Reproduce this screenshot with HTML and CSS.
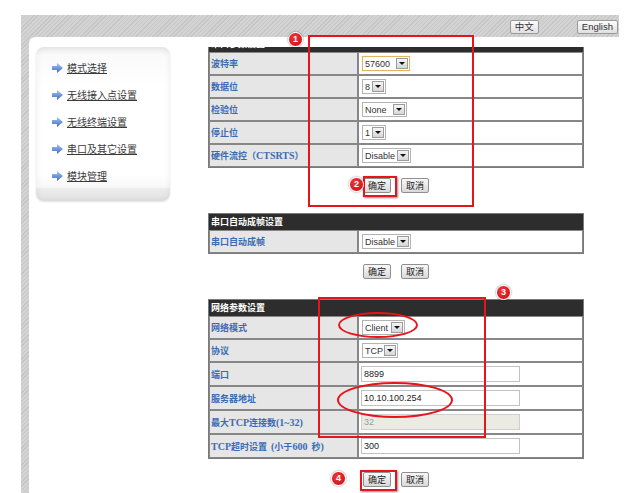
FILE: index.html
```html
<!DOCTYPE html>
<html lang="zh-CN">
<head>
<meta charset="utf-8">
<title>串口及其它设置</title>
<link rel="stylesheet" href="styles.css">
</head>
<body>
<div class="frame">
  <div class="topbar">
    <button class="lang">中文</button>
    <button class="lang">English</button>
  </div>
  <div class="content">
    <nav class="sidebar">
      <a class="item"><svg class="arrow" width="11" height="10" viewBox="0 0 11 10"><defs><linearGradient id="ag" x1="0" y1="0" x2="0" y2="1"><stop offset="0" stop-color="#a9c6f2"/><stop offset="1" stop-color="#3a6acb"/></linearGradient></defs><path d="M0 3H5V0L11 5L5 10V7H0Z" fill="url(#ag)"/></svg><span>模式选择</span></a>
      <a class="item"><svg class="arrow" width="11" height="10" viewBox="0 0 11 10"><path d="M0 3H5V0L11 5L5 10V7H0Z" fill="url(#ag)"/></svg><span>无线接入点设置</span></a>
      <a class="item"><svg class="arrow" width="11" height="10" viewBox="0 0 11 10"><path d="M0 3H5V0L11 5L5 10V7H0Z" fill="url(#ag)"/></svg><span>无线终端设置</span></a>
      <a class="item"><svg class="arrow" width="11" height="10" viewBox="0 0 11 10"><path d="M0 3H5V0L11 5L5 10V7H0Z" fill="url(#ag)"/></svg><span>串口及其它设置</span></a>
      <a class="item"><svg class="arrow" width="11" height="10" viewBox="0 0 11 10"><path d="M0 3H5V0L11 5L5 10V7H0Z" fill="url(#ag)"/></svg><span>模块管理</span></a>
    </nav>
    <main class="main">
      <div class="clip">
        <div class="tbl scrolled">
          <div class="th">串口参数设置</div>
          <div class="tr"><div class="lab">波特率</div><div class="val"><span class="sel focus w48">57600<i class="dd"></i></span></div></div>
          <div class="tr"><div class="lab">数据位</div><div class="val"><span class="sel w24">8<i class="dd"></i></span></div></div>
          <div class="tr"><div class="lab">检验位</div><div class="val"><span class="sel w45">None<i class="dd"></i></span></div></div>
          <div class="tr"><div class="lab">停止位</div><div class="val"><span class="sel w24">1<i class="dd"></i></span></div></div>
          <div class="tr"><div class="lab">硬件流控（<span class="lat">CTSRTS</span>）</div><div class="val"><span class="sel w49">Disable<i class="dd"></i></span></div></div>
        </div>
      </div>
      <div class="btns"><button class="btn">确定</button><button class="btn">取消</button></div>

      <div class="tbl">
        <div class="th">串口自动成帧设置</div>
        <div class="tr"><div class="lab">串口自动成帧</div><div class="val"><span class="sel w49">Disable<i class="dd"></i></span></div></div>
      </div>
      <div class="btns"><button class="btn">确定</button><button class="btn">取消</button></div>

      <div class="tbl">
        <div class="th">网络参数设置</div>
        <div class="tr"><div class="lab">网络模式</div><div class="val"><span class="sel w43">Client<i class="dd"></i></span></div></div>
        <div class="tr"><div class="lab">协议</div><div class="val"><span class="sel w36">TCP<i class="dd"></i></span></div></div>
        <div class="tr tall"><div class="lab">端口</div><div class="val"><input class="inp" type="text" value="8899"></div></div>
        <div class="tr tall"><div class="lab">服务器地址</div><div class="val"><input class="inp" type="text" value="10.10.100.254"></div></div>
        <div class="tr tall"><div class="lab">最大<span class="lat">TCP</span>连接数<span class="lat">(1~32)</span></div><div class="val"><input class="inp" type="text" value="32" disabled></div></div>
        <div class="tr tall"><div class="lab"><span class="lat">TCP</span>超时设置<span class="lat sp">(</span>小于<span class="lat">600</span><span class="sp">秒</span><span class="lat">)</span></div><div class="val"><input class="inp" type="text" value="300"></div></div>
      </div>
      <div class="btns last"><button class="btn">确定</button><button class="btn">取消</button></div>
    </main>
  </div>
</div>

<div class="mark rect r1"></div>
<div class="mark badge b1">1</div>
<div class="mark rect shadow r2"></div>
<div class="mark badge b2">2</div>
<div class="mark badge b3">3</div>
<div class="mark rect r3"></div>
<div class="mark ellipse e1"></div>
<div class="mark ellipse e2"></div>
<div class="mark badge b4">4</div>
<div class="mark rect shadow r4"></div>
</body>
</html>
```

FILE: styles.css
```css
html, body {
  margin: 0;
  padding: 0;
}
body {
  width: 628px;
  height: 493px;
  overflow: hidden;
  background: #fff;
  position: relative;
  font-family: "Liberation Sans", "Noto Sans CJK SC", sans-serif;
}

.frame {
  margin: 15px 0 0 21px;
  width: 598px;
  height: 478px;
  display: flex;
  flex-direction: column;
  background: repeating-linear-gradient(135deg, #c6c6c6 0 1px, #d3d3d3 1px 3px);
}

.topbar {
  height: 22px;
  flex: none;
  box-sizing: border-box;
  display: flex;
  justify-content: flex-end;
  align-items: flex-start;
  gap: 38px;
  padding: 5px 1px 0 0;
}
.lang {
  height: 14px;
  margin: 0;
  padding: 0 4px;
  border: 1px solid #9a9a9a;
  border-radius: 2px;
  background: linear-gradient(#fbfbfb, #e0e0e0);
  color: #333;
  font-family: "Liberation Sans", "Noto Sans CJK SC", sans-serif;
  font-size: 9.5px;
  line-height: 12px;
}

.content {
  flex: 1;
  margin-left: 8px;
  background: #fff;
  border-top-left-radius: 6px;
  display: flex;
  align-items: flex-start;
  padding: 10px 0 0 7px;
  overflow: hidden;
}

.sidebar {
  width: 134px;
  height: 154px;
  flex: none;
  box-sizing: border-box;
  padding: 7px 0 0 16px;
  border-radius: 8px;
  background: linear-gradient(to bottom, #ececec 0, #fafafa 8px, #fff 40px, #fff 128px, #f8f8f8 140px, #ebebeb 142px, #e3e3e3 100%);
  box-shadow: inset 0 0 7px rgba(0, 0, 0, 0.07), 0 1px 2px rgba(0, 0, 0, 0.12);
}
.item {
  display: flex;
  align-items: center;
  height: 27px;
  gap: 4px;
  color: #3a3a3a;
  font-family: "Noto Sans CJK SC", sans-serif;
  font-size: 10px;
  text-decoration: underline;
  text-underline-offset: 1px;
  cursor: pointer;
}
.arrow {
  flex: none;
  display: block;
}

.main {
  margin-left: 38px;
  width: 376px;
  flex: none;
}

.clip {
  overflow: hidden;
}
.scrolled {
  margin-top: -12px;
}

.tbl {
  border: 1px solid #7a7a7a;
  background: #fff;
}
.th {
  height: 16px;
  background: #2d2d2d;
  color: #fff;
  font-family: "Noto Sans CJK SC", sans-serif;
  font-weight: bold;
  font-size: 9px;
  line-height: 16px;
  padding-left: 2px;
}
.tr {
  display: flex;
}
.lab, .val {
  box-sizing: border-box;
  height: 23px;
  border: 1px solid #878787;
  display: flex;
  align-items: center;
}
.tr.tall .lab, .tr.tall .val {
  height: 24px;
}
.lab {
  width: 149px;
  flex: none;
  background: #e6e6e6;
  padding-left: 1px;
  color: #3b6bb4;
  font-family: "Noto Sans CJK SC", sans-serif;
  font-weight: bold;
  font-size: 9px;
  white-space: nowrap;
}
.lat {
  font-family: "Liberation Serif", serif;
  font-weight: bold;
  font-size: 10px;
}
.sp {
  margin-left: 4px;
}
.val {
  flex: 1;
  background: #fff;
  padding-left: 3px;
}

.sel {
  box-sizing: border-box;
  height: 15px;
  display: inline-flex;
  align-items: center;
  border: 1px solid #b4b4b4;
  background: #fff;
  color: #333;
  font-size: 9px;
  padding-left: 2px;
}
.sel.focus {
  border-color: #e2b564;
  box-shadow: 0 0 1px #f0cf90;
}
.w24 { width: 24px; }
.w36 { width: 36px; }
.w43 { width: 43px; }
.w45 { width: 45px; }
.w48 { width: 48px; }
.w49 { width: 49px; }
.dd {
  box-sizing: border-box;
  width: 12px;
  height: 11px;
  margin-left: auto;
  margin-right: 1px;
  border: 1px solid #9c9c9c;
  background: linear-gradient(#f5f5f5, #d6d6d6);
  display: flex;
  align-items: center;
  justify-content: center;
}
.dd::after {
  content: "";
  border-top: 3px solid #111;
  border-left: 3px solid transparent;
  border-right: 3px solid transparent;
}

.inp {
  box-sizing: border-box;
  width: 159px;
  height: 16px;
  margin: 0 0 0 -1px;
  padding: 0 0 0 2px;
  border: 1px solid #c2c2c2;
  background: #fff;
  color: #222;
  font-family: "Liberation Sans", sans-serif;
  font-size: 9px;
  outline: none;
}
.inp:disabled {
  background: #ebebe4;
  color: #9a9a9a;
  border-color: #cfcfcf;
}

.btns {
  display: flex;
  justify-content: center;
  gap: 10px;
  margin: 10px 0 20px;
}
.btns.last {
  margin-top: 13px;
}
.btn {
  height: 15px;
  margin: 0;
  padding: 0 4px;
  border: 1px solid #8f8f8f;
  border-radius: 2px;
  background: linear-gradient(#f8f8f8, #d9d9d9);
  color: #222;
  font-family: "Noto Sans CJK SC", sans-serif;
  font-size: 9px;
  line-height: 13px;
}

/* annotation overlays */
.mark {
  position: absolute;
  box-sizing: border-box;
}
.rect {
  border: 2px solid #e8141c;
}
.rect.shadow {
  box-shadow: 1px 1px 2px rgba(0, 0, 0, 0.45);
}
.ellipse {
  border: 2px solid #e8141c;
  border-radius: 50%;
}
.badge {
  width: 15px;
  height: 15px;
  border-radius: 50%;
  border: 1.5px solid #fff;
  background: radial-gradient(circle at 40% 35%, #f2333a, #c90c14);
  box-shadow: 0 0 2px rgba(0, 0, 0, 0.55);
  color: #fff;
  font-family: "Liberation Sans", sans-serif;
  font-weight: bold;
  font-size: 9px;
  line-height: 12px;
  text-align: center;
}
.r1 { left: 308px; top: 35px; width: 166px; height: 172px; }
.b1 { left: 288px; top: 32px; }
.r2 { left: 363px; top: 176px; width: 34px; height: 21px; }
.b2 { left: 349px; top: 177px; }
.b3 { left: 496px; top: 285px; }
.r3 { left: 318px; top: 297px; width: 168px; height: 141px; }
.e1 { left: 338px; top: 312px; width: 80px; height: 26px; }
.e2 { left: 337px; top: 382px; width: 116px; height: 36px; }
.b4 { left: 331px; top: 471px; }
.r4 { left: 360px; top: 470px; width: 37px; height: 21px; }
```
